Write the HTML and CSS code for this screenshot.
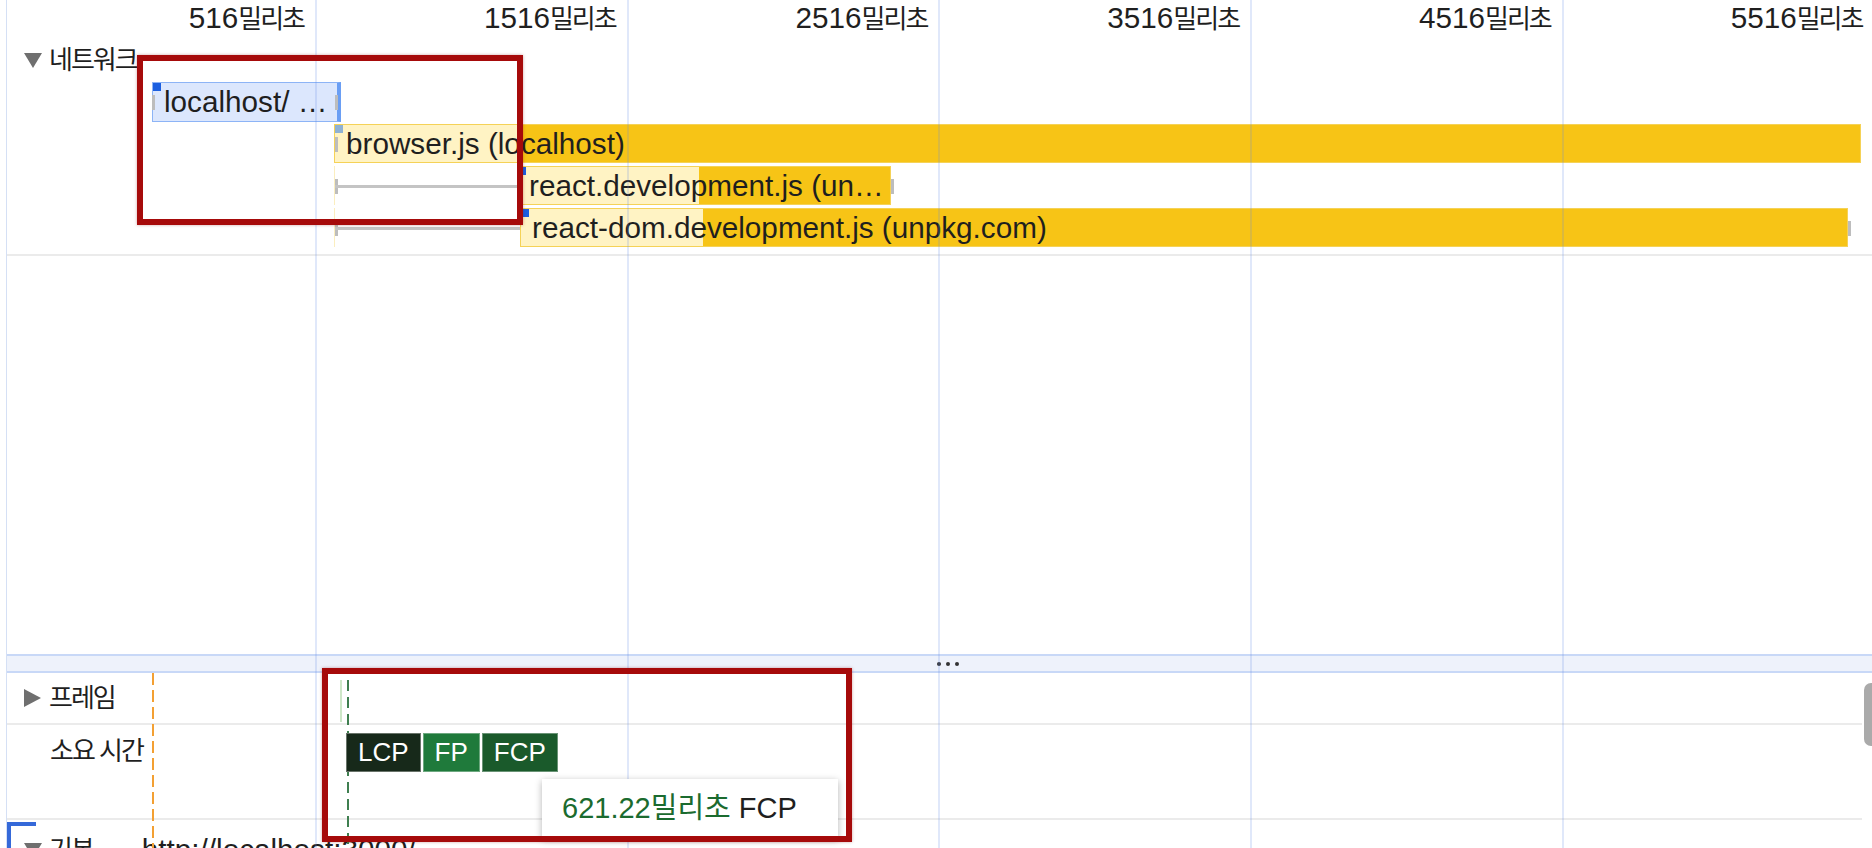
FILE: index.html
```html
<!DOCTYPE html>
<html lang="ko">
<head>
<meta charset="utf-8">
<title>Performance timeline</title>
<link rel="stylesheet" href="styles.css">
</head>
<body>
<div class="app">
  <div class="panel">
    <div class="ruler">
      <div class="tick">516<span class="ko">밀리초</span></div>
      <div class="tick">1516<span class="ko">밀리초</span></div>
      <div class="tick">2516<span class="ko">밀리초</span></div>
      <div class="tick">3516<span class="ko">밀리초</span></div>
      <div class="tick">4516<span class="ko">밀리초</span></div>
      <div class="tick">5516<span class="ko">밀리초</span></div>
    </div>

    <section class="network">
      <div class="track-head"><span class="tri-down"></span><span class="ko">네트워크</span></div>
      <div class="net-rows">
        <div class="net-row">
          <div class="req doc" style="left:145px;width:189px"><i class="ind"></i>localhost/ …</div>
          <i class="cap" style="left:145px"></i>
          <i class="cap" style="left:328px"></i>
        </div>
        <div class="net-row">
          <div class="req js" style="left:327px;width:1527px;--split:182px"><i class="ind muted"></i>browser.js (localhost)</div>
          <i class="cap" style="left:328px"></i>
        </div>
        <div class="net-row">
          <div class="whisker" style="left:327px;width:184px"></div>
          <div class="req js" style="left:510px;width:374px;--split:181px"><i class="ind"></i>react.development.js (un…</div>
          <i class="cap" style="left:884px"></i>
        </div>
        <div class="net-row">
          <div class="whisker" style="left:327px;width:187px"></div>
          <div class="req js" style="left:513px;width:1328px;--split:182px"><i class="ind"></i>react-dom.development.js (unpkg.com)</div>
          <i class="cap" style="left:1841px"></i>
        </div>
      </div>
    </section>

    <div class="empty"></div>

    <div class="splitter"><span class="dots"><i></i><i></i><i></i></span></div>

    <section class="lower">
      <div class="lrow frames"><span class="tri-right"></span><span class="ko">프레임</span></div>
      <div class="lrow timings"><span class="ko">소요 시간</span></div>
      <div class="lrow mainrow"><span class="tri-down"></span><span class="ko">기본</span><span class="url">— http://localhost:3000/</span></div>

      <div class="mark-nav"></div>
      <div class="mark-paint"></div>
      <div class="mark-fcp"></div>
      <div class="badges">
        <span class="badge lcp">LCP</span>
        <span class="badge fp">FP</span>
        <span class="badge fcp">FCP</span>
      </div>
      <div class="tooltip"><span class="tt-time">621.22밀리초</span> FCP</div>
    </section>
  </div>

  <div class="grid-overlay">
    <i></i><i></i><i></i><i></i><i></i><i></i>
  </div>

  <div class="scroll-thumb"></div>

  <div class="annot a1"></div>
  <div class="annot a2"></div>
</div>
</body>
</html>
```

FILE: styles.css
```css
* { box-sizing: border-box; }

html, body {
  margin: 0;
  padding: 0;
  background: #ffffff;
}

body {
  font-family: "Liberation Sans", "Noto Sans CJK KR", sans-serif;
  font-size: 29.7px;
  color: #1f1f1f;
}

.app {
  position: relative;
  width: 1872px;
  height: 848px;
  overflow: hidden;
}

.panel {
  margin-left: 6px;
  border-left: 1px solid #d5e0f5;
  height: 848px;
  display: flex;
  flex-direction: column;
}

.ko {
  font-size: 26px;
  letter-spacing: -2px;
}

/* ruler */
.ruler {
  flex: none;
  display: flex;
  height: 36px;
}

.tick {
  flex: 0 0 311.7px;
  padding-right: 12px;
  text-align: right;
  line-height: 36px;
  white-space: nowrap;
}

.tick:first-child { flex-basis: 309px; }

/* network track */
.network {
  flex: none;
  height: 220px;
  padding-top: 8px;
  border-bottom: 2px solid #ebebeb;
}

.track-head {
  display: flex;
  align-items: center;
  gap: 7px;
  height: 32px;
  padding-left: 17px;
  line-height: 32px;
}

.tri-down {
  width: 0;
  height: 0;
  border-left: 9.5px solid transparent;
  border-right: 9.5px solid transparent;
  border-top: 15px solid #6f6f6f;
}

.tri-right {
  width: 0;
  height: 0;
  border-top: 9px solid transparent;
  border-bottom: 9px solid transparent;
  border-left: 17px solid #6f6f6f;
  margin-right: 1px;
}

.net-rows {
  display: flex;
  flex-direction: column;
  gap: 3px;
  margin-top: 6px;
}

.net-row {
  position: relative;
  height: 39px;
}

.req {
  position: absolute;
  top: 0;
  height: 39px;
  line-height: 37px;
  padding-left: 11px;
  white-space: nowrap;
  overflow: hidden;
  border: 1px solid;
}

.req.doc {
  background: #dce7fd;
  border-color: #8db4f6;
  border-right: 4px solid #6a9ef4;
  height: 40px;
}

.req.js {
  background: linear-gradient(to right, #fff3c4 var(--split), #f7c416 var(--split));
  border-color: #f5d257;
}

.ind {
  position: absolute;
  top: 0;
  left: 0;
  width: 8px;
  height: 8px;
  background: #1c5fe0;
}

.ind.muted { background: #8fb1d3; }

.cap {
  position: absolute;
  top: 13px;
  width: 3px;
  height: 15px;
  background: #bdbdbd;
}

.whisker {
  position: absolute;
  top: 0;
  height: 39px;
  border-left: 1px solid #fbeebf;
}

.whisker::before {
  content: "";
  position: absolute;
  left: 0;
  top: 13px;
  width: 3px;
  height: 15px;
  background: #bdbdbd;
}

.whisker::after {
  content: "";
  position: absolute;
  left: 0;
  right: 0;
  top: 19px;
  height: 3px;
  background: #c4c4c4;
}

.empty {
  flex: none;
  height: 398px;
}

/* splitter */
.splitter {
  flex: none;
  height: 19px;
  background: #eef2fb;
  border-top: 2px solid #c8d8f7;
  border-bottom: 2px solid #c8d8f7;
  display: flex;
  align-items: center;
  justify-content: center;
  padding-left: 17px;
}

.dots {
  display: flex;
  gap: 5px;
}

.dots i {
  width: 4px;
  height: 4px;
  border-radius: 50%;
  background: #333333;
}

/* lower pane */
.lower {
  flex: 1;
  position: relative;
}

.lrow {
  display: flex;
  align-items: center;
  gap: 7px;
  padding-left: 17px;
  margin-right: 10px;
  border-bottom: 2px solid #ebebeb;
  line-height: 36px;
}

.frames { height: 52px; }

.timings {
  height: 95px;
  align-items: flex-start;
  padding-top: 8px;
  padding-left: 43px;
}

.mainrow {
  position: relative;
  height: 40px;
  align-items: flex-start;
  padding-top: 12px;
  border-bottom: 0;
}

.mainrow .tri-down { margin-top: 11px; }

.mainrow::before {
  content: "";
  position: absolute;
  left: 0;
  top: 2px;
  width: 25px;
  height: 40px;
  border-left: 4px solid #3569d9;
  border-top: 4px solid #3569d9;
}

.url { margin-left: 4px; }

.mark-nav {
  position: absolute;
  left: 145px;
  top: 0;
  bottom: 0;
  width: 2px;
  background: repeating-linear-gradient(to bottom, #f3a033 0 12px, transparent 12px 17px);
}

.mark-paint {
  position: absolute;
  left: 333px;
  top: 7px;
  width: 2px;
  height: 42px;
  background: #cde7c7;
}

.mark-fcp {
  position: absolute;
  left: 340px;
  top: 7px;
  bottom: 0;
  width: 2px;
  background: repeating-linear-gradient(to bottom, #3f7f50 0 11px, transparent 11px 17px);
}

.badges {
  position: absolute;
  left: 339px;
  top: 60px;
  display: flex;
  gap: 2px;
}

.badge {
  height: 39px;
  line-height: 37px;
  padding: 0 11px;
  font-size: 26px;
  color: #ffffff;
  border: 1px solid rgba(255, 255, 255, 0.35);
}

.badge.lcp { background: #17291a; }
.badge.fp { background: #1f7a3b; }
.badge.fcp { background: #1a5a2b; }

.tooltip {
  position: absolute;
  z-index: 2;
  left: 535px;
  top: 106px;
  width: 296px;
  height: 59px;
  padding-left: 20px;
  line-height: 59px;
  font-size: 29px;
  white-space: nowrap;
  background: #ffffff;
  box-shadow: 0 2px 7px rgba(0, 0, 0, 0.3);
}

.tt-time { color: #1b6b2f; }

/* time grid */
.grid-overlay {
  position: absolute;
  z-index: 1;
  top: 0;
  bottom: 0;
  left: 5.3px;
  width: 1900px;
  display: flex;
  pointer-events: none;
}

.grid-overlay i {
  flex: 0 0 311.7px;
  border-right: 2px solid rgba(100, 140, 230, 0.2);
}

.scroll-thumb {
  position: absolute;
  z-index: 2;
  left: 1864px;
  top: 683px;
  width: 14px;
  height: 63px;
  border-radius: 7px;
  background: #aaaaaa;
}

/* annotation boxes */
.annot {
  position: absolute;
  z-index: 3;
  border: 6px solid #a60a0a;
  box-shadow: 0 0 3px rgba(120, 0, 0, 0.35);
  pointer-events: none;
}

.a1 { left: 137px; top: 55px; width: 386px; height: 170px; }
.a2 { left: 322px; top: 668px; width: 530px; height: 174px; }
```
